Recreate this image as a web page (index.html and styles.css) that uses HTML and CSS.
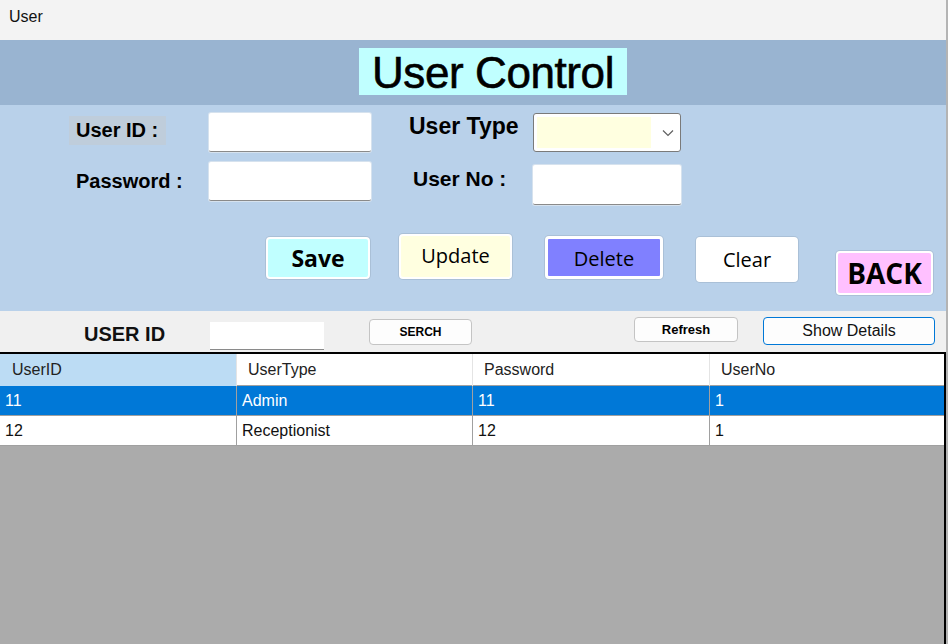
FILE: index.html
```html
<!DOCTYPE html>
<html>
<head>
<meta charset="utf-8">
<link rel="stylesheet" href="styles.css">
</head>
<body>
<div class="window">
  <div class="titlebar">User</div>
  <div class="header"><div class="title">User Control</div></div>
  <div class="form">
    <div class="fields">
      <div class="lbl-box">User ID :</div>
      <div class="input in-r1"></div>
      <div class="lbl-type">User Type</div>
      <div class="combo">
        <div class="combo-fill"></div>
        <svg class="chev" width="12" height="8" viewBox="0 0 12 8"><path d="M1 1.5 L6 6.5 L11 1.5" fill="none" stroke="#606060" stroke-width="1.2"/></svg>
      </div>
      <div class="lbl-pass">Password :</div>
      <div class="input in-r2"></div>
      <div class="lbl-no">User No :</div>
      <div class="input in-no"></div>
    </div>
    <div class="actions">
      <button class="btn b-save">Save</button>
      <button class="btn b-update">Update</button>
      <button class="btn b-delete">Delete</button>
      <button class="btn b-clear">Clear</button>
      <button class="btn b-back">BACK</button>
    </div>
  </div>
  <div class="searchbar">
    <div class="s-label">USER ID</div>
    <div class="s-input"></div>
    <button class="sbtn s-search">SERCH</button>
    <button class="sbtn s-refresh">Refresh</button>
    <button class="sbtn s-show">Show Details</button>
  </div>
  <div class="grid">
    <div class="row head">
      <div class="cell hcell active">UserID</div>
      <div class="cell hcell">UserType</div>
      <div class="cell hcell">Password</div>
      <div class="cell hcell">UserNo</div>
    </div>
    <div class="row sel">
      <div class="cell">11</div>
      <div class="cell">Admin</div>
      <div class="cell">11</div>
      <div class="cell">1</div>
    </div>
    <div class="row">
      <div class="cell">12</div>
      <div class="cell">Receptionist</div>
      <div class="cell">12</div>
      <div class="cell">1</div>
    </div>
  </div>
</div>
</body>
</html>
```
FILE: styles.css
```css
* { box-sizing: border-box; }
html, body { margin: 0; padding: 0; }
body {
  background: #b4b4b4;
  width: 948px;
  height: 644px;
  overflow: hidden;
  font-family: "Liberation Sans", Arial, sans-serif;
  color: #000;
}
.window {
  width: 946px;
  height: 644px;
  display: flex;
  flex-direction: column;
  background: #ababab;
}
.titlebar {
  height: 40px;
  background: #f3f3f3;
  font-size: 16px;
  line-height: 33px;
  padding-left: 9px;
  color: #111;
}
.header {
  height: 65px;
  background: #99b4d1;
  display: flex;
  justify-content: center;
  padding-top: 8px;
  padding-left: 40px;
}
.title {
  background: #c0ffff;
  height: 47px;
  width: 268px;
  font-size: 44px;
  line-height: 49px;
  text-align: center;
  letter-spacing: -0.4px;
  -webkit-text-stroke: 0.6px #000;
}
.form {
  height: 206px;
  background: #b9d1ea;
}
.fields {
  display: grid;
  grid-template-columns: 69px 140px 162px 38px 124px 148px;
  grid-template-rows: 39px 43px;
  row-gap: 10px;
  padding-top: 8px;
  align-items: start;
}
.fields > :nth-child(1) { grid-column: 2; grid-row: 1; }
.fields > :nth-child(2) { grid-column: 3; grid-row: 1; }
.fields > :nth-child(3) { grid-column: 5; grid-row: 1; }
.fields > :nth-child(4) { grid-column: 6; grid-row: 1; }
.fields > :nth-child(5) { grid-column: 2; grid-row: 2; }
.fields > :nth-child(6) { grid-column: 3; grid-row: 2; }
.fields > :nth-child(7) { grid-column: 5; grid-row: 2; }
.fields > :nth-child(8) { grid-column: 6; grid-row: 2; }
.lbl-box {
  width: 97px;
  height: 29px;
  margin-top: 3px;
  background: #bfcddb;
  font-weight: bold;
  font-size: 20px;
  line-height: 29px;
  padding-left: 7px;
  white-space: nowrap;
}
.lbl-type {
  font-weight: bold;
  font-size: 23px;
  white-space: nowrap;
}
.lbl-pass {
  font-weight: bold;
  font-size: 20px;
  padding-left: 7px;
  margin-top: 8px;
  white-space: nowrap;
}
.lbl-no {
  font-weight: bold;
  font-size: 21px;
  padding-left: 4px;
  margin-top: 5px;
  white-space: nowrap;
}
.input {
  background: #fff;
  border-bottom: 1px solid #8a8a8a;
  border-radius: 2px;
  box-shadow: 0 0 0 1px #d6e2ee;
}
.in-r1, .in-r2 { width: 162px; height: 39px; }
.in-no { width: 148px; height: 40px; margin-top: 3px; }
.combo {
  width: 148px;
  height: 39px;
  background: #fff;
  border: 1px solid #7a7a7a;
  border-radius: 3px;
  display: flex;
  align-items: center;
  padding: 3px;
}
.combo-fill {
  width: 114px;
  height: 31px;
  background: #ffffe0;
}
.chev { margin-left: 11px; }
.actions {
  display: flex;
  align-items: flex-start;
}
.btn {
  font-family: "Open Sans", "Liberation Sans", sans-serif;
  color: #000;
  border: 2px solid #fff;
  border-radius: 4px;
  box-shadow: 0 0 0 1px rgba(0,0,0,0.08);
  padding: 0;
  font-size: 20px;
  text-align: center;
}
.b-save { margin-left: 266px; margin-top: 32px; width: 104px; height: 42px; background: #c0ffff; font-weight: bold; font-size: 23px; }
.b-update { margin-left: 29px; margin-top: 29px; width: 113px; height: 45px; background: #ffffe0; padding-bottom: 2px; }
.b-delete { margin-left: 33px; margin-top: 31px; width: 118px; height: 43px; background: #8080ff; border-width: 3px; padding-top: 2px; }
.b-clear { margin-left: 33px; margin-top: 32px; width: 102px; height: 45px; background: #fff; }
.b-back { margin-left: 38px; margin-top: 46px; width: 97px; height: 44px; background: #ffc0ff; font-weight: bold; font-size: 28px; line-height: 38px; }
.searchbar {
  height: 41px;
  background: #f0f0f0;
  display: flex;
  align-items: flex-start;
}
.s-label {
  margin-left: 84px;
  margin-top: 12px;
  width: 83px;
  font-weight: bold;
  font-size: 20px;
  line-height: 23px;
  color: #111;
  white-space: nowrap;
}
.s-input {
  margin-left: 43px;
  margin-top: 11px;
  width: 114px;
  height: 28px;
  background: #fff;
  border-bottom: 1px solid #8a8a8a;
}
.sbtn {
  font-family: "Liberation Sans", Arial, sans-serif;
  background: #fdfdfd;
  border: 1px solid #c4c4c4;
  border-radius: 4px;
  padding: 0;
  color: #000;
  text-align: center;
}
.s-search { margin-left: 45px; margin-top: 8px; width: 103px; height: 26px; font-weight: bold; font-size: 12px; }
.s-refresh { margin-left: 162px; margin-top: 6px; width: 104px; height: 25px; font-weight: bold; font-size: 13px; }
.s-show { margin-left: 25px; margin-top: 6px; width: 172px; height: 28px; font-size: 16px; border: 1px solid #0078d7; background: #fdfdfd; color: #111; }
.grid {
  flex: 1;
  border-top: 2px solid #000;
  border-right: 2px solid #000;
  background: #ababab;
}
.row {
  display: grid;
  grid-template-columns: 237px 236px 237px 1fr;
  height: 30px;
  border-bottom: 1px solid #a0a0a0;
  background: #fff;
  font-size: 16px;
}
.row.head { height: 32px; border-bottom: 1px solid #a0a0a0; }
.cell {
  border-right: 1px solid #a0a0a0;
  padding-left: 5px;
  line-height: 30px;
  white-space: nowrap;
  color: #111;
}
.cell:last-child { border-right: none; }
.hcell {
  padding-left: 11px;
  line-height: 32px;
  border-right: 1px solid #e4e4e4;
  color: #222;
}
.hcell.active { background: #bcdcf4; padding-left: 12px; }
.row.sel { background: #0078d7; }
.row.sel .cell { color: #fff; }
```
